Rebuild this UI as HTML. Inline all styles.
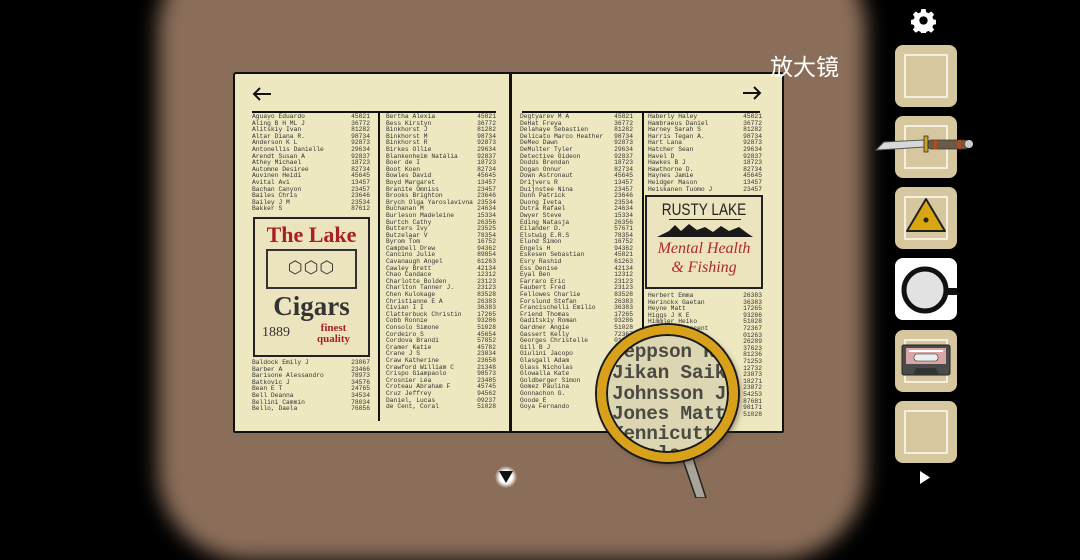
<!DOCTYPE html>
<html><head><meta charset="utf-8">
<style>
*{margin:0;padding:0;box-sizing:border-box}
body{width:1080px;height:498px;background:#000;position:relative;overflow:hidden;font-family:"Liberation Mono",monospace}
.bg{position:absolute;left:158px;top:-60px;width:708px;height:620px;border-radius:90px;background:#8b6e5a;filter:blur(10px)}
.book{position:absolute;left:233px;top:72px;width:551px;height:361px;background:#eee8c0;border:2.5px solid #111;border-radius:3px 3px 2px 2px}
.spine{position:absolute;left:274px;top:0;width:3px;height:100%;background:#111}
.rule{position:absolute;height:2px;background:#111;top:37px}
.col{position:absolute;font-size:6.3px;line-height:6.6px;color:#333}
.col div{display:flex;justify-content:space-between;white-space:pre}
.vd{position:absolute;width:1.5px;background:#111}
.ad{position:absolute;border:2px solid #222;background:#ece4bf}
.lens{position:absolute;left:601px;top:328px;width:134px;height:130px;border-radius:50%;overflow:hidden}
.lens .in{position:absolute;left:0;top:0;width:100%;height:100%;background:#dcd6b2;border-radius:50%}
.lt{position:absolute;left:11px;font-size:19.5px;font-weight:bold;color:#4a4a42;white-space:pre;letter-spacing:-.3px}
.slot{position:absolute;left:895px;width:62px;height:62px;border-radius:8px;background:#d6c79e}
.slot::after{content:"";position:absolute;left:9px;top:9px;width:40px;height:40px;border:2px solid #f5efdd;border-radius:1px}
.slot .i{position:absolute;left:16px;top:16px;width:30px;height:30px;border:2px solid #f3ecd6}
</style></head><body>
<div class="bg"></div>

<div class="book">
 <div class="spine"></div>
 <div class="rule" style="left:17px;width:244px"></div>
 <div class="rule" style="left:287px;width:238px"></div>
 <svg style="position:absolute;left:16px;top:12px" width="22" height="16"><path d="M20 8H3M9 2L3 8l6 6" stroke="#111" stroke-width="2" fill="none"/></svg>
 <svg style="position:absolute;left:506px;top:11px" width="22" height="16"><path d="M2 8h17M13 2l6 6-6 6" stroke="#111" stroke-width="2" fill="none"/></svg>
 <div class="vd" style="left:143px;top:37px;height:310px"></div>
 <div class="vd" style="left:407px;top:37px;height:310px"></div>

 <div class="col" style="left:17px;top:40px;width:118px">
<div><span>Aguayo Eduardo</span><span>45821</span></div><div><span>Aling B H ML J</span><span>36772</span></div><div><span>Alitskiy Ivan</span><span>81282</span></div><div><span>Altar Diana R.</span><span>98734</span></div><div><span>Anderson K L</span><span>92873</span></div><div><span>Antonellis Danielle</span><span>29634</span></div><div><span>Arendt Susan A</span><span>92837</span></div><div><span>Athey Michael</span><span>18723</span></div><div><span>Automne Desiree</span><span>82734</span></div><div><span>Auvinen Heidi</span><span>45645</span></div><div><span>Avital Avi</span><span>13457</span></div><div><span>Bachan Canyon</span><span>23457</span></div><div><span>Bailes Chris</span><span>23646</span></div><div><span>Bailey J M</span><span>23534</span></div><div><span>Bakker S</span><span>87612</span></div>
 </div>
 <div class="col" style="left:17px;top:286px;width:118px">
<div><span>Baldock Emily J</span><span>23867</span></div><div><span>Barber A</span><span>23466</span></div><div><span>Barisone Alessandro</span><span>78973</span></div><div><span>Batkovic J</span><span>34576</span></div><div><span>Bean E T</span><span>24765</span></div><div><span>Bell Deanna</span><span>34534</span></div><div><span>Bellini Cammin</span><span>78034</span></div><div><span>Bello, Daela</span><span>76856</span></div>
 </div>
 <div class="ad" style="left:18px;top:143px;width:117px;height:140px">
  <div style="position:absolute;left:0;top:3px;width:100%;text-align:center;font-family:'Liberation Serif',serif;font-weight:bold;font-size:22px;color:#a82020">The Lake</div>
  <div style="position:absolute;left:11px;top:30px;width:91px;height:40px;border:2px solid #333"></div>
  <div style="position:absolute;left:0;top:39px;width:100%;text-align:center;font-size:17px;color:#333;letter-spacing:1px">⬡⬡⬡</div>
  <div style="position:absolute;left:0;top:72px;width:100%;text-align:center;font-family:'Liberation Serif',serif;font-weight:bold;font-size:27px;color:#333">Cigars</div>
  <div style="position:absolute;left:7px;top:106px;font-family:'Liberation Serif',serif;font-size:14px;color:#333">1889</div>
  <div style="position:absolute;left:62px;top:104px;font-family:'Liberation Serif',serif;font-weight:bold;font-size:11px;line-height:11px;color:#a82020;text-align:center">finest<br>quality</div>
 </div>

 <div class="col" style="left:151px;top:40px;width:110px">
<div><span>Bertha Alexia</span><span>45821</span></div><div><span>Bess Kirstyn</span><span>36772</span></div><div><span>Binkhorst J</span><span>81282</span></div><div><span>Binkhorst M</span><span>98734</span></div><div><span>Binkhorst R</span><span>92873</span></div><div><span>Birkes Ollie</span><span>29634</span></div><div><span>Blankenheim Natália</span><span>92837</span></div><div><span>Boer de I</span><span>18723</span></div><div><span>Boot Koen</span><span>82734</span></div><div><span>Bowles David</span><span>45645</span></div><div><span>Boyd Margaret</span><span>13457</span></div><div><span>Branite Omniss</span><span>23457</span></div><div><span>Brooks Brighton</span><span>23646</span></div><div><span>Brych Olga Yaroslavivna</span><span>23534</span></div><div><span>Buchanan M</span><span>24634</span></div><div><span>Burleson Madeleine</span><span>15334</span></div><div><span>Burtch Cathy</span><span>26356</span></div><div><span>Butters Ivy</span><span>23525</span></div><div><span>Butzelaar V</span><span>78354</span></div><div><span>Byrom Tom</span><span>16752</span></div><div><span>Campbell Drew</span><span>94362</span></div><div><span>Cancino Julie</span><span>89854</span></div><div><span>Cavanaugh Angel</span><span>61263</span></div><div><span>Cawley Brett</span><span>42134</span></div><div><span>Chao Candace</span><span>12312</span></div><div><span>Charlotte Bolden</span><span>23123</span></div><div><span>Charlton Tanner J.</span><span>23123</span></div><div><span>Chen Kulokage</span><span>83528</span></div><div><span>Christianne E A</span><span>26383</span></div><div><span>Civian I I</span><span>36383</span></div><div><span>Clatterbuck Christin</span><span>17265</span></div><div><span>Cobb Ronnie</span><span>93286</span></div><div><span>Consolo Simone</span><span>51028</span></div><div><span>Cordeiro S</span><span>45654</span></div><div><span>Cordova Brandi</span><span>57852</span></div><div><span>Cramer Katie</span><span>45782</span></div><div><span>Crane J S</span><span>23834</span></div><div><span>Craw Katherine</span><span>23658</span></div><div><span>Crawford William C</span><span>21348</span></div><div><span>Crispo Giampaolo</span><span>98573</span></div><div><span>Crosnier Léa</span><span>23485</span></div><div><span>Croteau Abraham F</span><span>45745</span></div><div><span>Cruz Jeffrey</span><span>94562</span></div><div><span>Daniel, Lucas</span><span>09237</span></div><div><span>de Cent, Coral</span><span>51028</span></div>
 </div>

 <div class="col" style="left:285px;top:40px;width:113px">
<div><span>Degtyarev M A</span><span>45821</span></div><div><span>DeHat Freya</span><span>36772</span></div><div><span>Delahaye Sebastien</span><span>81282</span></div><div><span>Delicato Marco Heather</span><span>98734</span></div><div><span>DeMeo Dawn</span><span>92873</span></div><div><span>DeMulter Tyler</span><span>29634</span></div><div><span>Detective Gideon</span><span>92837</span></div><div><span>Dodds Brendan</span><span>18723</span></div><div><span>Dogan Onnur</span><span>82734</span></div><div><span>Down Astronaut</span><span>45645</span></div><div><span>Drijvers R</span><span>13457</span></div><div><span>Duijnstee Nina</span><span>23457</span></div><div><span>Dunn Patrick</span><span>23646</span></div><div><span>Duong Iveta</span><span>23534</span></div><div><span>Dutra Rafael</span><span>24634</span></div><div><span>Dwyer Steve</span><span>15334</span></div><div><span>Eding Natasja</span><span>26356</span></div><div><span>Eilander D.</span><span>57671</span></div><div><span>Elstwig E.R.S</span><span>78354</span></div><div><span>Elund Simon</span><span>16752</span></div><div><span>Engels H</span><span>94362</span></div><div><span>Eskesen Sebastian</span><span>45821</span></div><div><span>Esry Rashid</span><span>61263</span></div><div><span>Ess Denise</span><span>42134</span></div><div><span>Eyal Ben</span><span>12312</span></div><div><span>Farraro Eric</span><span>23123</span></div><div><span>Faubert Fred</span><span>23123</span></div><div><span>Fellowes Charlie</span><span>83528</span></div><div><span>Forslund Stefan</span><span>26383</span></div><div><span>Francischelli Emilio</span><span>36383</span></div><div><span>Friend Thomas</span><span>17265</span></div><div><span>Gaditskiy Roman</span><span>93286</span></div><div><span>Gardner Angie</span><span>51028</span></div><div><span>Gassert Kelly</span><span>72367</span></div><div><span>Georges Christelle</span><span>01263</span></div><div><span>Gill B J</span><span>26289</span></div><div><span>Giulini Jacopo</span><span></span></div><div><span>Glasgall Adam</span><span></span></div><div><span>Glass Nicholas</span><span></span></div><div><span>Glowalla Kate</span><span></span></div><div><span>Goldberger Simon</span><span></span></div><div><span>Gomez Paulina</span><span></span></div><div><span>Gonnachon G.</span><span></span></div><div><span>Goode E</span><span></span></div><div><span>Goya Fernando</span><span></span></div>
 </div>

 <div class="col" style="left:413px;top:40px;width:114px">
<div><span>Haberly Haley</span><span>45821</span></div><div><span>Hambraeus Daniel</span><span>36772</span></div><div><span>Harney Sarah S</span><span>81282</span></div><div><span>Harris Tegan A.</span><span>98734</span></div><div><span>Hart Lana</span><span>92873</span></div><div><span>Hatcher Sean</span><span>29634</span></div><div><span>Havel D</span><span>92837</span></div><div><span>Hawkes B J</span><span>18723</span></div><div><span>Hawthorne D.</span><span>82734</span></div><div><span>Haynes Jamie</span><span>45645</span></div><div><span>Heidger Mason</span><span>13457</span></div><div><span>Heiskanen Tuomo J</span><span>23457</span></div>
 </div>
 <div class="col" style="left:413px;top:219px;width:114px">
<div><span>Herbert Emma</span><span>26383</span></div><div><span>Herinckx Gaetan</span><span>36383</span></div><div><span>Heyne Matt</span><span>17265</span></div><div><span>Higgs J K E</span><span>93286</span></div><div><span>Himmler Heiko</span><span>51028</span></div><div><span>Hoffsten Vincent</span><span>72367</span></div><div><span></span><span>01263</span></div><div><span></span><span>26289</span></div><div><span></span><span>37623</span></div><div><span></span><span>81236</span></div><div><span></span><span>71253</span></div><div><span></span><span>12732</span></div><div><span></span><span>23873</span></div><div><span></span><span>18271</span></div><div><span></span><span>23872</span></div><div><span></span><span>54253</span></div><div><span></span><span>87681</span></div><div><span></span><span>98171</span></div><div><span></span><span>51028</span></div>
 </div>
 <div class="ad" style="left:410px;top:121px;width:118px;height:94px">
  <div style="position:absolute;left:0;top:3px;width:100%;text-align:center;font-family:'Liberation Sans',sans-serif;font-size:17px;color:#222;transform:scaleX(.8)">RUSTY LAKE</div>
  <div style="position:absolute;left:22px;top:22px;width:72px;height:1px;background:#222"></div>
  <svg style="position:absolute;left:8px;top:24px" width="100" height="18"><path d="M2 16 L14 10 L20 4 L26 10 L34 3 L42 9 L50 6 L58 11 L66 5 L74 10 L84 6 L92 12 L98 16 Z" fill="#1a1a1a"/></svg>
  <div style="position:absolute;left:0;top:42px;width:100%;text-align:center;font-family:'Liberation Serif',serif;font-style:italic;font-size:16px;line-height:19px;color:#b02a2a">Mental Health<br>&amp; Fishing</div>
 </div>
</div>

<!-- magnifier -->
<svg style="position:absolute;left:660px;top:445px" width="60" height="53"><path d="M18 6 L32 4 L34 16 L46 53 L36 53 L24 18 Z" fill="#a9a49a" stroke="#222" stroke-width="1.5"/><rect x="20" y="2" width="14" height="8" fill="#c8c4bb" stroke="#222" stroke-width="1.5" transform="rotate(-10 27 6)"/></svg>
<div class="lens"><div class="in"></div>
 <div class="lt" style="top:13px">Jeppson K</div>
 <div class="lt" style="top:34px">Jikan Saik</div>
 <div class="lt" style="top:55px">Johnsson J</div>
 <div class="lt" style="top:75px">Jones Matt</div>
 <div class="lt" style="top:95px">Kennicutt</div>
 <div class="lt" style="top:115px">Kuvala</div>
</div>
<div style="position:absolute;left:597px;top:325px;width:141px;height:137px;border-radius:50%;border:9px solid #d9a11a;box-shadow:0 0 0 2px #1a1a1a, inset 0 0 0 2px #1a1a1a, 3px 3px 6px rgba(60,50,40,.5)"></div>

<!-- down arrow -->
<div style="position:absolute;left:495px;top:466px;width:22px;height:22px;border-radius:50%;background:radial-gradient(circle,#fff 40%,rgba(255,255,255,0) 72%)"></div>
<svg style="position:absolute;left:498px;top:470px" width="16" height="14"><path d="M1 1H15L8 13Z" fill="#111"/></svg>

<div style="position:absolute;left:770px;top:48px;font-family:'Liberation Sans','Noto Sans CJK SC',sans-serif;font-size:23px;color:#fff">放大镜</div>

<!-- gear -->
<svg style="position:absolute;left:911px;top:8px" width="25" height="25" viewBox="0 0 24 24"><path fill="#fff" d="M10 1h4l.6 3 2.2 1 2.6-1.7 2.8 2.8-1.7 2.6 1 2.2 3 .6v4l-3 .6-1 2.2 1.7 2.6-2.8 2.8-2.6-1.7-2.2 1-.6 3h-4l-.6-3-2.2-1-2.6 1.7-2.8-2.8 1.7-2.6-1-2.2-3-.6v-4l3-.6 1-2.2L1.8 6.1l2.8-2.8 2.6 1.7 2.2-1zM12 8a4 4 0 100 8 4 4 0 000-8z"/></svg>

<div class="slot" style="top:45px"></div>
<div class="slot" style="top:116px"></div>
<div class="slot" style="top:187px"></div>
<div style="position:absolute;left:895px;top:258px;width:62px;height:62px;border-radius:8px;background:#fff"></div>
<div class="slot" style="top:330px"></div>
<div class="slot" style="top:401px"></div>

<!-- knife -->
<svg style="position:absolute;left:874px;top:132px" width="100" height="24"><path d="M2 18 L10 10 L50 8 L50 15 L20 17 Z" fill="#d8d8d8" stroke="#555" stroke-width="1"/><rect x="50" y="4" width="4" height="16" fill="#c9a227" stroke="#333" stroke-width=".8"/><rect x="54" y="8" width="40" height="9" rx="3" fill="#6b5a45" stroke="#333" stroke-width=".8"/><rect x="60" y="8" width="3" height="9" fill="#b04a20"/><rect x="84" y="8" width="3" height="9" fill="#b04a20"/><circle cx="95" cy="12" r="4" fill="#ccc"/></svg>
<!-- triangle -->
<svg style="position:absolute;left:905px;top:197px" width="42" height="36"><path d="M21 2 L40 34 L2 34 Z" fill="#d9a612" stroke="#222" stroke-width="2" stroke-linejoin="round"/><circle cx="21" cy="23" r="2.5" fill="#222"/></svg>
<!-- magnifier icon -->
<svg style="position:absolute;left:895px;top:258px" width="62" height="62"><circle cx="30" cy="32" r="21" fill="#e2e2e2" stroke="#111" stroke-width="5"/><path d="M51 30 H62 V37 H51" fill="#111"/></svg>
<!-- cassette -->
<svg style="position:absolute;left:901px;top:344px" width="50" height="33"><rect x="1" y="1" width="48" height="30" rx="2" fill="#4a4a4a" stroke="#222"/><rect x="5" y="4" width="40" height="16" fill="#d9a5a5"/><rect x="8" y="6" width="34" height="2" fill="#fff"/><rect x="13" y="10" width="24" height="7" rx="3" fill="#eee" stroke="#333" stroke-width=".6"/><path d="M12 31 L15 24 H35 L38 31" fill="#333"/></svg>

<svg style="position:absolute;left:919px;top:470px" width="12" height="15"><path d="M1 1 L11 7.5 L1 14Z" fill="#fff"/></svg>
</body></html>
